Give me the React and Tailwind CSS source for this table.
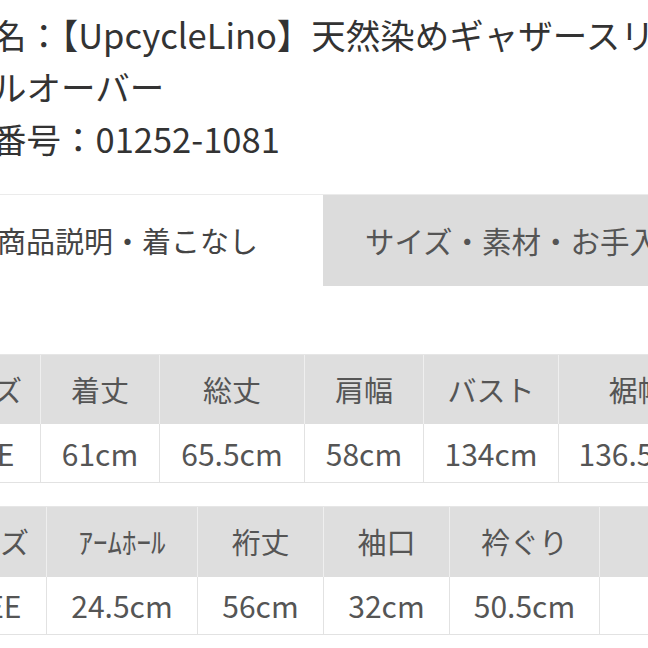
import React from 'react';

const font = { fontFamily: '"Noto Sans CJK JP", "Noto Sans", sans-serif' };

// first table: header labels and values
const sizeTable1 = {
  shift: 'ml-[-82px]',
  cols: 'grid-cols-[123px_119px_145px_119px_135px_158px]',
  head: ['サイズ', '着丈', '総丈', '肩幅', 'バスト', '裾幅'],
  body: ['FREE', '61cm', '65.5cm', '58cm', '134cm', '136.5cm'],
};

const sizeTable2 = {
  shift: 'ml-[-74px]',
  cols: 'grid-cols-[121px_151px_126px_126px_150px_200px]',
  head: ['サイズ', 'ｱｰﾑﾎｰﾙ', '裄丈', '袖口', '衿ぐり', ''],
  body: ['FREE', '24.5cm', '56cm', '32cm', '50.5cm', ''],
};

const SizeTable = ({ table, headH, bodyH }) => (
  <div className={`${table.shift} w-max border-t border-[#e6e6e6] border-b border-b-[#e2e2e2]`}>
    <div className={`grid ${table.cols} ${headH} bg-[#dedede]`}>
      {table.head.map((label, i) => (
        <div
          key={i}
          className="flex items-center justify-center border-r border-[#efefef] text-[29px] text-[#555] whitespace-nowrap"
        >
          {label}
        </div>
      ))}
    </div>
    <div className={`grid ${table.cols} ${bodyH} bg-white`}>
      {table.body.map((value, i) => (
        <div
          key={i}
          className="flex items-center justify-center border-r border-[#e2e2e2] text-[30px] text-[#555] whitespace-nowrap"
        >
          {value}
        </div>
      ))}
    </div>
  </div>
);

const App = () => {
  return (
    <div className="w-[648px] h-[648px] overflow-hidden bg-white" style={font}>
      {/* product name / number */}
      <div className="pt-[8px] ml-[-77px] text-[34.5px] leading-[52px] text-[#333] whitespace-nowrap">
        <div>商品名：【UpcycleLino】天然染めギャザースリーブ</div>
        <div>ブプルオーバー</div>
        <div>商品番号：01252-1081</div>
      </div>

      {/* tabs */}
      <div className="mt-[30px] flex border-t border-[#ebebeb] whitespace-nowrap">
        <div className="ml-[-45px] w-[368px] h-[91px] shrink-0 flex items-center pl-[42px] bg-white text-[29px] text-[#444]">
          商品説明・着こなし
        </div>
        <div className="w-[400px] h-[91px] shrink-0 flex items-center pl-[42px] bg-[#dcdcdc] text-[29.5px] text-[#555]">
          サイズ・素材・お手入れ
        </div>
      </div>

      {/* size tables */}
      <div className="mt-[68px] flex flex-col gap-[23px]">
        <SizeTable table={sizeTable1} headH="h-[69px]" bodyH="h-[58px]" />
        <SizeTable table={sizeTable2} headH="h-[70px]" bodyH="h-[57px]" />
      </div>
    </div>
  );
};

export default App;
